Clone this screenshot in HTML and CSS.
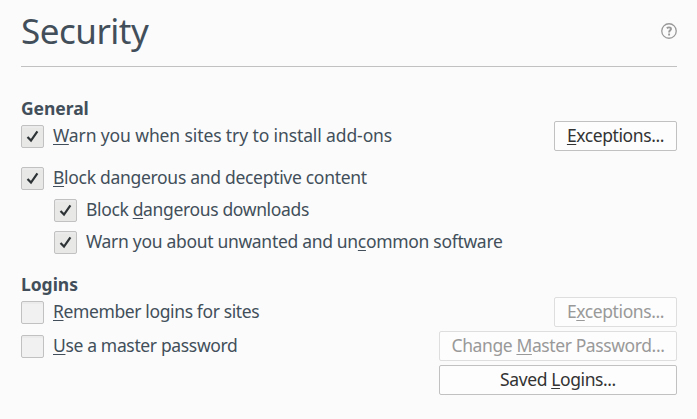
FILE: index.html
```html
<!DOCTYPE html>
<html lang="en">
<head>
<meta charset="utf-8">
<title>Security</title>
<link rel="stylesheet" href="styles.css">
</head>
<body>
<main class="pane">
  <header class="header">
    <h1 class="title">Security</h1>
    <svg class="help" viewBox="0 0 16 16"><circle cx="8" cy="8" r="7.25"/><path class="mark" d="M5.8 5.2C6.5 4.6 7.2 4.4 8 4.4C9.3 4.4 10 5 10 5.9C10 7.3 8.1 7.4 8.1 9.4M8.1 10.6V12.6"/></svg>
  </header>

  <section class="group">
    <h2 class="caption">General</h2>
    <div class="row">
      <label class="option"><span class="box"><svg class="tick" viewBox="0 0 13 13"><path d="M1.5 7L5 10.6L11.4 1.4"/></svg></span><span class="label warn"><u>W</u>arn you when sites try to install add-ons</span></label>
      <button class="button"><span class="text"><u>E</u>xceptions...</span></button>
    </div>
    <div class="row row-block">
      <label class="option"><span class="box"><svg class="tick" viewBox="0 0 13 13"><path d="M1.5 7L5 10.6L11.4 1.4"/></svg></span><span class="label block"><u>B</u>lock dangerous and deceptive content</span></label>
    </div>
    <div class="row row-sub">
      <label class="option"><span class="box"><svg class="tick" viewBox="0 0 13 13"><path d="M1.5 7L5 10.6L11.4 1.4"/></svg></span><span class="label downloads">Block <u>d</u>angerous downloads</span></label>
    </div>
    <div class="row row-sub">
      <label class="option"><span class="box"><svg class="tick" viewBox="0 0 13 13"><path d="M1.5 7L5 10.6L11.4 1.4"/></svg></span><span class="label software">Warn you about unwanted and un<u>c</u>ommon software</span></label>
    </div>
  </section>

  <section class="group logins">
    <h2 class="caption">Logins</h2>
    <div class="row">
      <label class="option"><span class="box"></span><span class="label remember"><u>R</u>emember logins for sites</span></label>
      <button class="button" disabled><span class="text">E<u>x</u>ceptions...</span></button>
    </div>
    <div class="row row-next">
      <label class="option"><span class="box"></span><span class="label master"><u>U</u>se a master password</span></label>
      <button class="button wide" disabled><span class="text">Change <u>M</u>aster Password...</span></button>
    </div>
    <div class="row row-next row-end">
      <button class="button wide"><span class="text">Saved <u>L</u>ogins...</span></button>
    </div>
  </section>
</main>
</body>
</html>
```

FILE: styles.css
```css
* { box-sizing: border-box; }
body {
  margin: 0;
  background: #fbfbfb;
  color: #424f5a;
  font: 17.5px/22px "Noto Sans", sans-serif;
}
.pane { padding: 0 20px 0 21px; }
.header {
  height: 67px;
  display: flex;
  justify-content: space-between;
  align-items: center;
  border-bottom: 1px solid #c1c1c1;
  padding-bottom: 4px;
}
.title { margin: 0; font-size: 35px; line-height: 46px; font-weight: 400; letter-spacing: -0.5px; }
.help { width: 16px; height: 16px; fill: none; stroke: #999; stroke-width: 1.3; }
.mark { stroke-width: 1.9; }
.group { padding-top: 30px; }
.logins { padding-top: 15px; }
.caption { margin: 0; height: 24px; font-size: 17.5px; line-height: 22px; font-weight: 700; letter-spacing: -0.05px; }
.row { height: 30px; display: flex; justify-content: space-between; align-items: center; }
.row-block { height: 32px; margin-top: 11px; }
.row-sub { height: 32px; padding-left: 33px; }
.row-next { margin-top: 4px; }
.row-end { justify-content: flex-end; }
.option { display: flex; align-items: center; gap: 9px; }
.box {
  width: 23px;
  height: 23px;
  display: grid;
  place-items: center;
  border: 1px solid #c1c1c1;
  border-radius: 2px;
  background: #f1f1f1;
  box-shadow: inset 0 2px #ebebeb;
}
.box:has(svg) { background: #e8e8e7; }
.tick { width: 13px; height: 13px; fill: none; stroke: #2e3436; stroke-width: 2.2; }
.label { white-space: nowrap; padding-bottom: 2px; letter-spacing: -0.35px; }
.warn { letter-spacing: -0.11px; }
.block { letter-spacing: -0.3px; }
.software { letter-spacing: -0.31px; }
.remember { letter-spacing: -0.38px; }
u { text-decoration: underline 1px; text-underline-offset: 2px; text-decoration-skip-ink: none; }
.button {
  width: 123px;
  height: 30px;
  padding: 0;
  border: 1px solid #c1c1c1;
  border-radius: 2px;
  background: #fdfdfd;
  color: #333;
  font: inherit;
  white-space: nowrap;
}
.button:disabled { border-color: #dedede; color: #999; }
.wide { width: 238px; }
.text { display: block; padding-bottom: 2px; letter-spacing: -0.4px; }
```
